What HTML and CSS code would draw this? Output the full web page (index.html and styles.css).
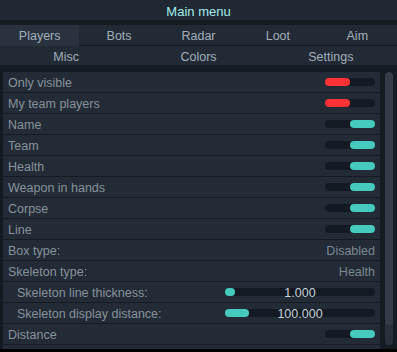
FILE: index.html
```html
<!DOCTYPE html>
<html lang="en">
<head>
    <meta charset="UTF-8">
    <meta name="viewport" content="width=device-width, initial-scale=1.0">
    <title>Main menu</title>
    <link rel="stylesheet" href="styles.css">
</head>
<body>
    <div class="window">
        <div class="title">Main menu</div>

        <div class="tabs tabs-top">
            <div class="tab active">Players</div>
            <div class="tab">Bots</div>
            <div class="tab">Radar</div>
            <div class="tab">Loot</div>
            <div class="tab">Aim</div>
        </div>
        <div class="tabs tabs-bottom">
            <div class="tab">Misc</div>
            <div class="tab">Colors</div>
            <div class="tab">Settings</div>
        </div>

        <div class="content">
            <div class="list">
                <div class="row"><span>Only visible</span><div class="toggle off"><i></i></div></div>
                <div class="row"><span>My team players</span><div class="toggle off"><i></i></div></div>
                <div class="row"><span>Name</span><div class="toggle on"><i></i></div></div>
                <div class="row"><span>Team</span><div class="toggle on"><i></i></div></div>
                <div class="row"><span>Health</span><div class="toggle on"><i></i></div></div>
                <div class="row"><span>Weapon in hands</span><div class="toggle on"><i></i></div></div>
                <div class="row"><span>Corpse</span><div class="toggle on"><i></i></div></div>
                <div class="row"><span>Line</span><div class="toggle on"><i></i></div></div>
                <div class="row"><span>Box type:</span><span class="value">Disabled</span></div>
                <div class="row"><span>Skeleton type:</span><span class="value">Health</span></div>
                <div class="row sub">
                    <span>Skeleton line thickness:</span>
                    <div class="slider"><i style="width: 10px"></i><b>1.000</b></div>
                </div>
                <div class="row sub">
                    <span>Skeleton display distance:</span>
                    <div class="slider"><i style="width: 24px"></i><b>100.000</b></div>
                </div>
                <div class="row"><span>Distance</span><div class="toggle on"><i></i></div></div>
                <div class="row"><span>&nbsp;</span></div>
            </div>
            <div class="scrollbar"><div class="thumb"></div></div>
        </div>
    </div>
</body>
</html>
```

FILE: styles.css
```css
body {
    margin: 0;
    background-color: #000;
    font-family: "Liberation Sans", Arial, sans-serif;
    font-size: 12px;
    overflow: hidden;
}
.window {
    width: 397px;
    height: 349px;
    background-color: #141b23;
    display: flex;
    flex-direction: column;
    overflow: hidden;
}
.title {
    height: 20px;
    line-height: 24px;
    text-align: center;
    font-size: 13px;
    color: #a4ece9;
    background-color: #1f2833;
    margin-bottom: 5px;
}
.tabs {
    display: grid;
    background-color: #212a35;
    color: #a3afbb;
}
.tabs-top {
    grid-template-columns: repeat(5, 1fr);
    height: 20px;
    margin-bottom: 1px;
}
.tabs-bottom {
    grid-template-columns: repeat(3, 1fr);
    height: 19px;
    margin-bottom: 7px;
}
.tab {
    text-align: center;
    line-height: 22px;
    font-size: 12.5px;
}
.tabs-bottom .tab {
    line-height: 22px;
}
.tab.active {
    background-color: #29333f;
}
.content {
    display: flex;
    flex: 1;
    min-height: 0;
    padding-left: 3px;
}
.list {
    width: 377px;
    display: flex;
    flex-direction: column;
    gap: 1px;
    overflow: hidden;
}
.row {
    flex: none;
    height: 20px;
    background-color: #222b36;
    color: #88929c;
    display: flex;
    align-items: center;
    justify-content: space-between;
    padding: 0 5px;
    font-size: 12.5px;
}
.row > span {
    padding-top: 2px;
}
.row.sub {
    padding-left: 14px;
}
.value {
    color: #7d8791;
}
.toggle {
    width: 50px;
    height: 8px;
    border-radius: 4px;
    background-color: #131a23;
    display: flex;
}
.toggle i {
    width: 25px;
    height: 8px;
    border-radius: 4px;
}
.toggle.off i {
    background-color: #ff3236;
}
.toggle.on {
    justify-content: flex-end;
}
.toggle.on i {
    background-color: #45cabd;
}
.slider {
    position: relative;
    width: 150px;
    height: 8px;
    border-radius: 4px;
    background-color: #131a23;
}
.slider i {
    display: block;
    height: 8px;
    border-radius: 4px;
    background-color: #45cabd;
}
.slider b {
    position: absolute;
    left: 0;
    right: 0;
    top: -2px;
    line-height: 14px;
    text-align: center;
    font-weight: normal;
    color: #c9d1d9;
}
.scrollbar {
    width: 8px;
    height: 273px;
    margin-left: 5px;
    border-radius: 4px;
    background-color: #29313c;
    overflow: hidden;
}
.thumb {
    height: 253px;
    border-radius: 4px;
    background-color: #343d4a;
}
```
